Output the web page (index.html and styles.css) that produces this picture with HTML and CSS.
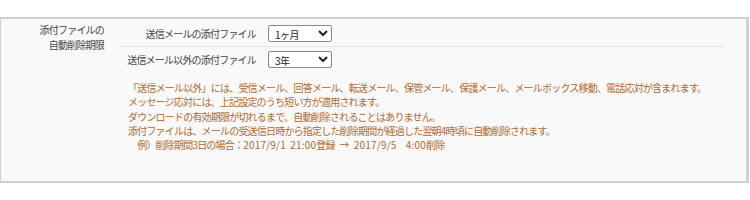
FILE: index.html
```html
<!DOCTYPE html>
<html lang="ja">
<head>
    <meta charset="UTF-8">
    <title>添付ファイルの自動削除期限</title>
    <link rel="stylesheet" href="styles.css">
</head>
<body>
    <div class="panel">
        <div class="label-col">添付ファイルの<br>自動削除期限</div>
        <div class="content">
            <div class="row">
                <div class="row-label">送信メールの添付ファイル</div>
                <select class="period">
                    <option>1ヶ月</option>
                    <option>3ヶ月</option>
                    <option>6ヶ月</option>
                </select>
            </div>
            <div class="row">
                <div class="row-label">送信メール以外の添付ファイル</div>
                <select class="period">
                    <option>3年</option>
                    <option>1年</option>
                </select>
            </div>
            <div class="notes">
                <p>「送信メール以外」には、受信メール、回答メール、転送メール、保管メール、保護メール、メールボックス移動、電話応対が含まれます。</p>
                <p>メッセージ応対には、上記設定のうち短い方が適用されます。</p>
                <p>ダウンロードの有効期限が切れるまで、自動削除されることはありません。</p>
                <p>添付ファイルは、メールの受送信日時から指定した削除期間が経過した翌朝4時頃に自動削除されます。</p>
                <p class="example">　例）削除期間3日の場合：<span class="num">2017/9/1 21:00</span>登録<span class="num"> → 2017/9/5</span>　<span class="num">4:00</span>削除</p>
            </div>
        </div>
    </div>
</body>
</html>
```

FILE: styles.css
```css
body {
    margin: 0;
    background: #fff;
    font-family: "Noto Sans CJK JP", "Noto Sans", sans-serif;
    font-size: 10px;
    letter-spacing: -0.8px;
    color: #444;
}
.panel {
    display: flex;
    width: 745px;
    height: 162px;
    margin-top: 17px;
    background: #f9f9f9;
    border-style: solid;
    border-color: #d0d0d0;
    border-width: 2px 3px 2px 1px;
}
.label-col {
    width: 103px;
    padding-top: 3px;
    text-align: right;
    line-height: 15px;
}
.content {
    width: 605px;
    margin-left: 16px;
    padding-top: 2px;
}
.row {
    display: flex;
    align-items: center;
    height: 25px;
    border-bottom: 1px solid #e3e3e3;
}
.row:nth-child(2) {
    border-bottom: none;
}
.row-label {
    width: 136px;
    text-align: right;
}
.period {
    width: 64px;
    height: 17px;
    margin-left: 12px;
    padding: 0 2px;
    font-family: inherit;
    font-size: 10px;
    letter-spacing: -0.5px;
    color: #222;
    background: #fff;
    border: 1px solid #888;
    border-radius: 2px;
}
.notes {
    margin-top: 9px;
    padding-left: 8px;
    color: #b06a2e;
    line-height: 14.3px;
}
.notes p {
    margin: 0;
}
.notes .num {
    letter-spacing: 0.2px;
    word-spacing: 2px;
}
```
